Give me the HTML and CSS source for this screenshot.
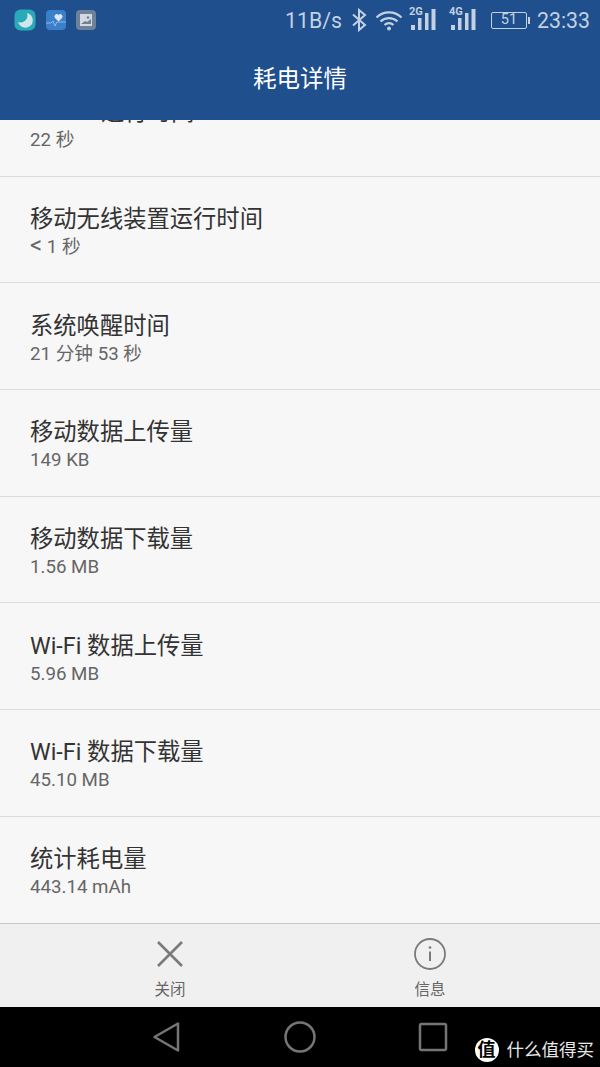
FILE: index.html
```html
<!DOCTYPE html>
<html lang="zh">
<head>
<meta charset="utf-8">
<title>耗电详情</title>
<link rel="stylesheet" href="styles.css">
</head>
<body>
<div class="screen">
  <header class="appbar">
    <div class="status">
      <div class="notifs">
        <svg class="n n-moon" viewBox="0 0 22 22"><rect x="0.5" y="0.5" width="21" height="21" rx="6" fill="#2aa9b8"/><path d="M13 4a7.500 7.500 0 1 1-9 9a7 7 0 0 0 9-9z" fill="#cfe6ea"/></svg>
        <svg class="n n-heart" viewBox="0 0 20 20"><rect width="20" height="20" rx="4" fill="#3a7fc9"/><path d="M12.500 11.500l-3.500-3.500a2.300 2.300 0 0 1 3.500-3a2.300 2.300 0 0 1 3.500 3z" fill="#dbe8f5"/><path d="M0 13h5l2-2 2 5 2-4h9" fill="none" stroke="#b9d3ee" stroke-width="0.7"/></svg>
        <svg class="n n-pic" viewBox="0 0 20 20"><rect width="20" height="20" rx="4" fill="#6d8198"/><rect x="4" y="4" width="12" height="12" fill="#d2d9e0"/><path d="M5 14l4-3 2 1 4-3v5z" fill="#6d8198"/><circle cx="12" cy="7.500" r="1.300" fill="#6d8198"/></svg>
      </div>
      <div class="sys">
        <span class="speed">11B/s</span>
        <svg class="bt" width="16" height="24" viewBox="0 0 16 24"><path d="M2 6.500l12 10.500-6 5V2l6 5-12 10.500" fill="none" stroke="#c3d1e2" stroke-width="2"/></svg>
        <svg class="wifi" width="28" height="22" viewBox="0 0 28 22"><path d="M1.500 8.500a18 18 0 0 1 25 0M5.500 12.500a12.500 12.500 0 0 1 17 0M9.500 16a6.500 6.500 0 0 1 9 0" fill="none" stroke="#c3d1e2" stroke-width="2.200"/><circle cx="14" cy="19.500" r="2" fill="#c3d1e2"/></svg>
        <div class="sig sig-2g"><span class="net">2G</span>
          <svg width="27" height="26" viewBox="0 0 27 26"><path d="M2 18h4v5H2zM9 11h3.500v12H9zM16 6h3.500v17H16zM22.500 2h4v21h-4z" fill="#c3d1e2"/></svg></div>
        <div class="sig sig-4g"><span class="net">4G</span>
          <svg width="27" height="26" viewBox="0 0 27 26"><path d="M2 18h4v5H2zM9 11h3.500v12H9zM16 6h3.500v17H16zM22.500 2h4v21h-4z" fill="#c3d1e2"/></svg></div>
        <div class="batt"><span class="batt-n">51</span></div><i class="batt-tip"></i>
        <span class="clock">23:33</span>
      </div>
    </div>
    <h1 class="title">耗电详情</h1>
  </header>

  <main class="viewport">
    <ul class="list">
      <li class="row"><div class="t">WLAN 运行时间</div><div class="s">22 秒</div></li>
      <li class="row"><div class="t">移动无线装置运行时间</div><div class="s"><span class="lt">&lt;</span> 1 秒</div></li>
      <li class="row"><div class="t">系统唤醒时间</div><div class="s">21 分钟 53 秒</div></li>
      <li class="row"><div class="t">移动数据上传量</div><div class="s">149 KB</div></li>
      <li class="row"><div class="t">移动数据下载量</div><div class="s">1.56 MB</div></li>
      <li class="row"><div class="t">Wi-Fi 数据上传量</div><div class="s">5.96 MB</div></li>
      <li class="row"><div class="t">Wi-Fi 数据下载量</div><div class="s">45.10 MB</div></li>
      <li class="row"><div class="t">统计耗电量</div><div class="s">443.14 mAh</div></li>
    </ul>
  </main>

  <footer class="actions">
    <div class="action">
      <svg width="34" height="34" viewBox="0 0 34 34"><path d="M5 5l24 24M29 5L5 29" stroke="#7a7a7a" stroke-width="2.600" fill="none"/></svg>
      <span class="label">关闭</span>
    </div>
    <div class="action">
      <svg width="34" height="34" viewBox="0 0 34 34"><circle cx="17" cy="17" r="15" fill="none" stroke="#7a7a7a" stroke-width="1.800"/><path d="M17 14.500v9.500" stroke="#7a7a7a" stroke-width="2" fill="none"/><circle cx="17" cy="10.500" r="1.300" fill="#7a7a7a"/></svg>
      <span class="label">信息</span>
    </div>
  </footer>

  <nav class="navbar">
    <svg class="nav-i" width="32" height="32" viewBox="0 0 32 32"><path d="M27 2.500v27L3.500 16z" fill="none" stroke="#757575" stroke-width="2.500" stroke-linejoin="round"/></svg>
    <svg class="nav-i" width="32" height="32" viewBox="0 0 32 32"><circle cx="16" cy="16" r="14.500" fill="none" stroke="#757575" stroke-width="2.500"/></svg>
    <svg class="nav-i" width="32" height="32" viewBox="0 0 32 32"><rect x="3" y="3" width="26" height="26" rx="1.500" fill="none" stroke="#757575" stroke-width="2.500"/></svg>
    <div class="wm"><span class="wm-badge">值</span><span class="wm-text">什么值得买</span></div>
  </nav>
</div>
</body>
</html>
```
FILE: styles.css
```css
* { box-sizing: border-box; }
html, body { margin: 0; padding: 0; }
body { font-family: Roboto, "Noto Sans CJK SC", sans-serif; background: #f7f7f7; }
.screen { width: 600px; height: 1067px; display: flex; flex-direction: column; overflow: hidden; }

.appbar { height: 120px; background: #1f4f8d; flex: none; display: flex; flex-direction: column; }
.status { height: 40px; display: flex; justify-content: space-between; align-items: center; padding: 0 10px 0 14px; }
.notifs { display: flex; align-items: center; gap: 10px; }
.n { display: block; }
.n-moon { width: 22px; height: 22px; }
.n-heart, .n-pic { width: 20px; height: 20px; }
.sys { display: flex; align-items: center; color: #c3d1e2; }
.speed, .clock { font-size: 21.300px; }
.bt { margin-left: 9px; }
.wifi { margin-left: 8px; }
.sig { position: relative; width: 27px; height: 26px; margin-left: 6px; }
.sig svg { display: block; }
.sig-4g { margin-left: 13px; }
.net { position: absolute; left: 0; top: 0; font-size: 11px; font-weight: 700; line-height: 10px; }
.batt { width: 36px; height: 17px; margin-left: 15px; border: 1.500px solid #c3d1e2; border-radius: 2px; display: flex; align-items: center; justify-content: center; }
.batt-n { font-size: 14.500px; line-height: 14px; }
.batt-tip { width: 2px; height: 7px; background: #c3d1e2; margin: 0 7px 0 1px; }
.title { margin: 0; flex: 1; display: flex; align-items: center; justify-content: center; font-size: 23.500px; font-weight: 400; color: #fff; padding-bottom: 6px; }

.viewport { flex: 1; overflow: hidden; min-height: 0; }
.list { list-style: none; margin: -50px 0 0; padding: 0; }
.row { height: 106.700px; padding: 3px 30px 0; border-bottom: 1px solid #dcdcdc; display: flex; flex-direction: column; justify-content: center; }
.t { font-size: 23.300px; line-height: 32px; color: #333; }
.s { font-size: 18.700px; line-height: 24px; color: #666; }
.lt { font-size: 24px; line-height: 20px; }

.actions { height: 84px; flex: none; background: #f0f0f0; border-top: 1px solid #c9c9c9; display: flex; justify-content: center; gap: 200px; }
.action { width: 60px; display: flex; flex-direction: column; align-items: center; padding-top: 13px; }
.action svg { display: block; }
.label { font-size: 15.500px; line-height: 20px; color: #666; margin-top: 9px; }

.navbar { height: 60px; flex: none; background: #000; position: relative; display: flex; align-items: center; justify-content: center; gap: 101px; }
.nav-i { display: block; }
.wm { position: absolute; right: 6px; bottom: 5px; display: flex; align-items: center; gap: 8px; color: #e8e8e8; }
.wm-badge { width: 24px; height: 24px; border-radius: 50%; background: #fff; color: #000; font-size: 18px; line-height: 24px; text-align: center; font-weight: 700; }
.wm-text { font-size: 17.500px; line-height: 24px; }
```
